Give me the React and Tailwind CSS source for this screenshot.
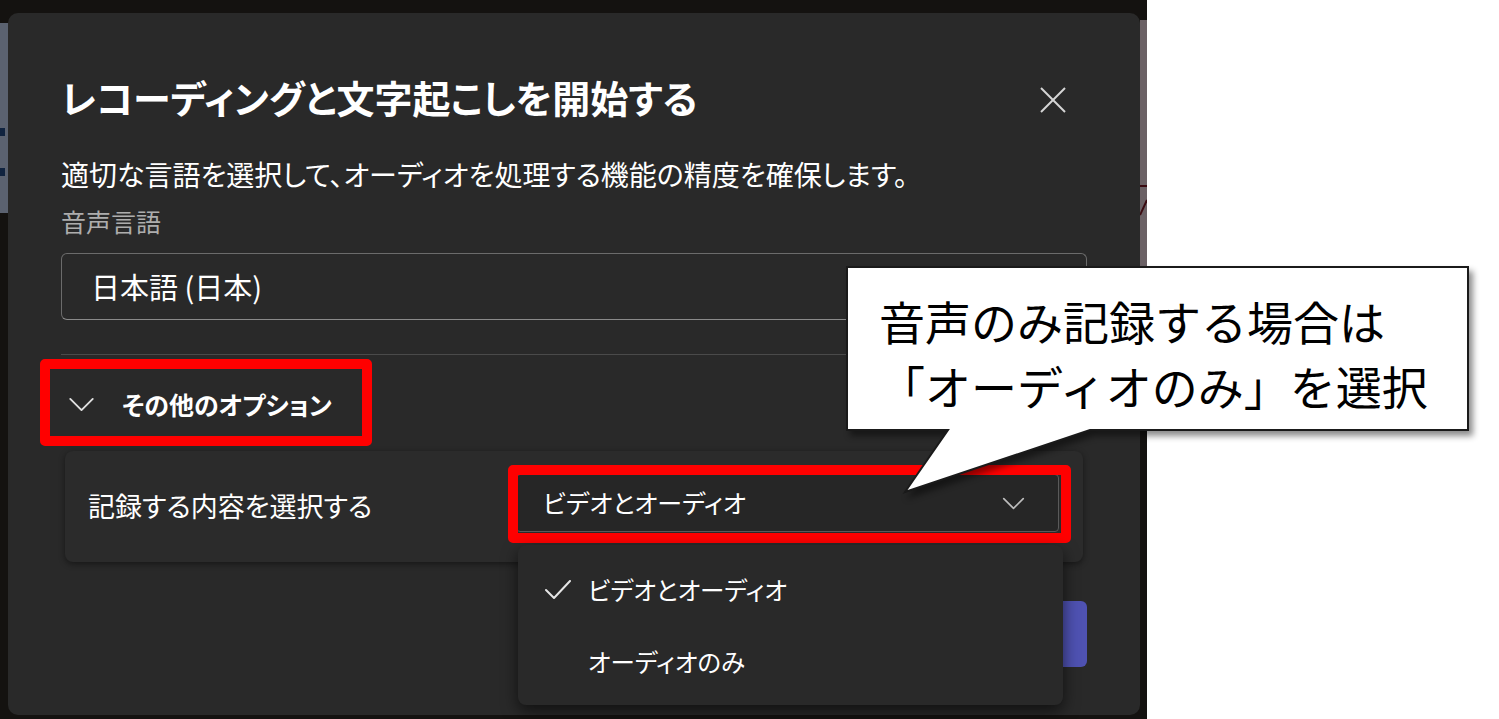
import React from "react";

const jp = "font-['Noto_Sans_CJK_JP','Noto_Sans',sans-serif] [font-feature-settings:'palt']";

function Chevron({ className = "" }) {
  return (
    <svg viewBox="0 0 28 16" className={className} fill="none" stroke="currentColor" strokeWidth="2" strokeLinecap="round" strokeLinejoin="round">
      <polyline points="2,2 14,14 26,2" />
    </svg>
  );
}

export default function App() {
  return (
    <div className={`relative w-[1499px] h-[719px] overflow-hidden bg-white flex ${jp}`}>
      {/* dark Teams area */}
      <div className="w-[1147px] h-full bg-[#141210] flex">
        {/* left strip */}
        <div className="w-[8px] pt-[23px] flex flex-col">
          <div className="h-[190px] bg-[#5b6270] flex flex-col pt-[105px] gap-[32px]">
            <div className="w-[5px] h-[8px] bg-[#10233f]" />
            <div className="w-[5px] h-[8px] bg-[#10233f]" />
          </div>
        </div>

        {/* dialog */}
        <div className="mt-[13px] w-[1132px] h-[702px] rounded-[10px] bg-[#292929] px-[53px] pt-[62px] flex flex-col text-white">
          <div className="flex items-start justify-between">
            <h1 className="text-[38px] leading-[44px] font-bold">レコーディングと文字起こしを開始する</h1>
            <svg viewBox="0 0 26 26" className="w-[26px] h-[26px] mt-[12px] mr-[21px] text-[#d6d6d6]" fill="none" stroke="currentColor" strokeWidth="2">
              <line x1="1" y1="1" x2="25" y2="25" />
              <line x1="25" y1="1" x2="1" y2="25" />
            </svg>
          </div>

          <p className="mt-[38px] text-[28px] leading-[34px]">適切な言語を選択して、オーディオを処理する機能の精度を確保します。</p>
          <p className="mt-[14px] text-[25px] leading-[32px] text-[#adadad]">音声言語</p>

          <div className="mt-[16px] h-[67px] rounded-[6px] border border-[#6b6b6b] border-b-[#8a8a8a] flex items-center pl-[29px] text-[29px]">
            日本語 (日本)
          </div>

          <div className="mt-[34px] h-px bg-[#4a4a4a]" />

          <div className="mt-[29px] h-[40px] flex items-center pl-[7px]">
            <Chevron className="w-[27px] h-[15px] text-[#e0e0e0]" />
            <span className="ml-[27px] text-[25px] font-bold leading-[40px]">その他のオプション</span>
          </div>

          <div className="mt-[27px] mx-[4px] h-[111px] rounded-[8px] bg-[#2b2b2b] shadow-[0_2px_6px_rgba(0,0,0,0.45)] flex items-center justify-between pl-[23px] pr-[24px]">
            <span className="text-[27px]">記録する内容を選択する</span>
            <div className="w-[543px] h-[58px] -mt-[7px] rounded-[4px] bg-[#262626] border border-[#5a5a5a] flex items-center justify-between pl-[26px] pr-[33px]">
              <span className="text-[25px]">ビデオとオーディオ</span>
              <Chevron className="w-[23px] h-[13px] text-[#bdbdbd]" />
            </div>
          </div>

          <div className="mt-[39px] flex justify-end gap-[16px]">
            <div className="h-[66px] w-[150px] rounded-[6px] border border-[#6b6b6b] flex items-center justify-center text-[24px]">キャンセル</div>
            <div className="h-[66px] w-[110px] rounded-[6px] bg-[#4f52b2] flex items-center justify-center text-[24px] font-bold">開始</div>
          </div>
        </div>

        {/* right strip */}
        <div className="w-[7px] pt-[20px] flex flex-col">
          <div className="h-[310px] bg-[#6b6165]">
            <svg viewBox="0 0 7 310" className="w-[7px] h-[310px]" fill="none" stroke="#3a0a10" strokeWidth="2">
              <line x1="0" y1="166" x2="7" y2="166" />
              <line x1="0" y1="195" x2="7" y2="180" />
            </svg>
          </div>
        </div>
      </div>

      {/* annotation red boxes */}
      <div className="absolute left-[40px] top-[359px] w-[332px] h-[87px] border-[10px] border-[#ff0000] rounded-[5px]" />
      <div className="absolute left-[508px] top-[465px] w-[563px] h-[78px] border-[10px] border-[#ff0000] rounded-[5px]" />

      {/* dropdown menu */}
      <div className="absolute left-[518px] top-[545px] w-[545px] h-[160px] rounded-[8px] bg-[#292929] shadow-[0_6px_16px_rgba(0,0,0,0.6)] pt-[9px] text-white flex flex-col">
        <div className="h-[72px] flex items-center pl-[27px]">
          <svg viewBox="0 0 26 20" className="w-[26px] h-[20px] text-[#e6e6e6]" fill="none" stroke="currentColor" strokeWidth="2" strokeLinecap="round" strokeLinejoin="round">
            <polyline points="1,10 9,18 25,1" />
          </svg>
          <span className="ml-[17px] text-[24.5px]">ビデオとオーディオ</span>
        </div>
        <div className="h-[72px] flex items-center pl-[70px]">
          <span className="text-[24.5px]">オーディオのみ</span>
        </div>
      </div>

      {/* callout */}
      <svg className="absolute left-0 top-0 w-[1499px] h-[719px] pointer-events-none [filter:drop-shadow(4px_5px_3px_rgba(0,0,0,0.45))]" viewBox="0 0 1499 719">
        <path d="M847,267 H1468 V430 H1090 L905,492 L948,430 H847 Z" fill="#ffffff" stroke="#1a1a1a" strokeWidth="2" strokeLinejoin="miter" />
      </svg>
      <div className="absolute left-[879px] top-[288px] text-black text-[46px] leading-[65px] [font-feature-settings:normal] whitespace-nowrap">
        <div>音声のみ記録する場合は</div>
        <div>「オーディオのみ」を選択</div>
      </div>
    </div>
  );
}
